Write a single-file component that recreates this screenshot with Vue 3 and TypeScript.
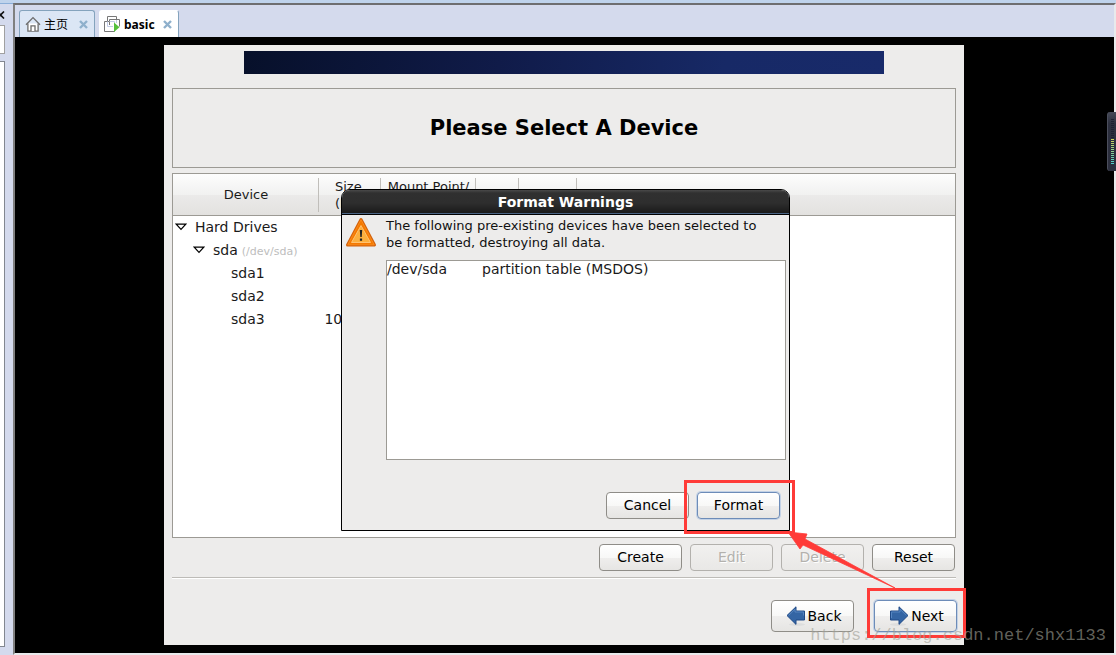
<script setup lang="ts">
interface Row {
  name: string
  level: number
  path?: string
  size?: string
}

const rows: Row[] = [
  { name: 'Hard Drives', level: 0 },
  { name: 'sda', level: 1, path: '(/dev/sda)' },
  { name: 'sda1', level: 2 },
  { name: 'sda2', level: 2 },
  { name: 'sda3', level: 2, size: '10240' },
]

const warnings = [{ device: '/dev/sda', detail: 'partition table (MSDOS)' }]
const meterBars = Array.from({ length: 23 }, (_, i) => i)

function barColor(i: number): string {
  if (i < 10) return '#1d2030'
  const t = (i - 10) / 12
  return `rgb(${Math.round(205 - 125 * t)}, ${Math.round(210 - 5 * t)}, ${Math.round(90 + 110 * t)})`
}
</script>

<template>
  <div class="window">
    <aside class="library">
      <button class="library-close" aria-label="Close library">
        <svg width="5" height="8" viewBox="0 0 5 8"><path d="M-3 0.5 L4 7.5 M4 0.5 L-3 7.5" stroke="#111" stroke-width="1.6" /></svg>
      </button>
      <div class="library-search"></div>
      <div class="library-tree"></div>
    </aside>
    <main class="workspace">
      <nav class="tabs">
        <div class="tab">
          <svg width="16" height="16" viewBox="0 0 16 16" fill="#fff" stroke="#6c6c6c" stroke-width="1.3">
            <path d="M2.9 7.5 V15.2 H13.1 V7.5" />
            <path d="M1 8.8 L8 1.6 L15 8.8" fill="none" />
            <path d="M6 15 V9.8 H10 V15" />
          </svg>
          <a href="#home">主页</a>
          <button class="tab-close" aria-label="Close 主页">
            <svg width="9" height="9" viewBox="0 0 9 9"><path d="M1 1 L8 8 M8 1 L1 8" stroke="#8fb0cc" stroke-width="2.4" /></svg>
          </button>
        </div>
        <div class="tab active">
          <svg width="16" height="16" viewBox="0 0 16 16" fill="none" stroke="#777">
            <path d="M3.5 5.5 V0.5 H12.5 V3.5" />
            <path d="M5.5 9 V3.5 H15.5 V10.5" />
            <path d="M5 5.5 H0.5 V15.5 H10.5 V14" />
            <path d="M3.5 5.5 V10.5 H9 M5.5 5.5 H10.5 V8 M12.5 4 V7" stroke="#c3cde8" />
            <path d="M10 6.5 L15.5 11.3 L10 16 Z" fill="#55c03c" stroke="none" />
          </svg>
          <a href="#basic">basic</a>
          <button class="tab-close" aria-label="Close basic">
            <svg width="9" height="9" viewBox="0 0 9 9"><path d="M1 1 L8 8 M8 1 L1 8" stroke="#8fb0cc" stroke-width="2.4" /></svg>
          </button>
        </div>
      </nav>
      <div class="console">
        <section class="guest">
          <div class="banner"></div>
          <header class="heading"><h1>Please Select A Device</h1></header>
          <div class="devices">
            <table>
              <colgroup>
                <col class="c-device" /><col class="c-size" /><col class="c-mount" /><col class="c-type" /><col class="c-format" /><col />
              </colgroup>
              <thead>
                <tr>
                  <th scope="col">Device</th>
                  <th scope="col" class="size-head">Size<br />(MB)</th>
                  <th scope="col" class="top">Mount Point/</th>
                  <th></th>
                  <th></th>
                  <th class="last"></th>
                </tr>
              </thead>
              <tbody>
                <tr v-for="row in rows" :key="row.name">
                  <td :class="'level' + row.level">
                    <svg v-if="row.level < 2" class="expander" width="12" height="8" viewBox="0 0 12 8">
                      <path d="M1.2 1.2 H10.8 L6 6.4 Z" fill="#fff" stroke="#000" stroke-width="1.2" />
                    </svg>
                    <span>{{ row.name }}</span>
                    <small v-if="row.path">{{ row.path }}</small>
                  </td>
                  <td class="size">{{ row.size }}</td>
                  <td></td>
                  <td></td>
                  <td></td>
                  <td></td>
                </tr>
              </tbody>
            </table>
          </div>
          <div class="actions">
            <button>Create</button>
            <button disabled>Edit</button>
            <button disabled>Delete</button>
            <button>Reset</button>
          </div>
          <footer class="steps">
            <button>
              <svg width="20" height="20" viewBox="0 0 20 20">
                <ellipse cx="11" cy="18.5" rx="8" ry="1.5" fill="#ddd" />
                <path d="M1 9.5 L10 0.8 V5 H18.5 V14 H10 V18.4 Z" fill="#3465a4" stroke="#204a87" />
                <path d="M2.6 9.5 L9 3.2 V6 H17.5 V9.5" fill="none" stroke="#5585c0" />
              </svg>
              <span>Back</span>
            </button>
            <button class="focused">
              <svg width="20" height="20" viewBox="0 0 20 20">
                <ellipse cx="9" cy="18.5" rx="8" ry="1.5" fill="#ddd" />
                <path d="M19 9.5 L10 0.8 V5 H1.5 V14 H10 V18.4 Z" fill="#3465a4" stroke="#204a87" />
                <path d="M2.5 12 V6 H11 V3.2 L17.4 9.5" fill="none" stroke="#5585c0" />
              </svg>
              <span>Next</span>
            </button>
          </footer>

          <div class="dialog" role="dialog" aria-labelledby="dialog-title">
            <h2 id="dialog-title">Format Warnings</h2>
            <div class="dialog-body">
              <svg width="32" height="32" viewBox="0 0 32 32">
                <path d="M16 2.5 L29.5 28 H2.5 Z" fill="#f57900" stroke="#d4630c" stroke-width="3" stroke-linejoin="round" />
                <path d="M16 2.7 L29.2 27.8 H2.8 Z" fill="#f57900" stroke="#fb8b1a" stroke-width="1" stroke-linejoin="round" />
                <path d="M16 8.5 L25.5 25.5 H6.5 Z" fill="#fcaf3e" stroke="#ffc272" stroke-width="1" stroke-linejoin="round" />
                <path d="M14.8 13 H17.2 L16.7 20 H15.3 Z M14.9 21.6 H17.1 V23.8 H14.9 Z" fill="#222" />
              </svg>
              <div class="dialog-content">
                <p>The following pre-existing devices have been selected to be formatted, destroying all data.</p>
                <div class="warning-list">
                  <table>
                    <colgroup><col class="c-path" /><col /></colgroup>
                    <tbody>
                      <tr v-for="w in warnings" :key="w.device">
                        <td>{{ w.device }}</td>
                        <td>{{ w.detail }}</td>
                      </tr>
                    </tbody>
                  </table>
                </div>
              </div>
            </div>
            <div class="dialog-actions">
              <button>Cancel</button>
              <button class="focused">Format</button>
            </div>
          </div>

          <svg class="marks" width="810" height="600" viewBox="0 0 810 600" aria-hidden="true">
            <rect x="521.5" y="436.5" width="108" height="51" fill="none" stroke="#ff3b38" stroke-width="3" />
            <rect x="704.5" y="544.5" width="96" height="47" fill="none" stroke="#ff3b38" stroke-width="3" />
            <path d="M624 487 L643 489 L641 494 L731 543 L639 500 L636 504 Z" fill="#ff3b38" stroke="#ff3b38" stroke-width="0.8" />
          </svg>
        </section>
        <div class="watermark">https://blog.csdn.net/shx1133</div>
        <div class="meter">
          <i v-for="i in meterBars" :key="i" :style="{ background: barColor(i) }"></i>
        </div>
      </div>
    </main>
  </div>
</template>

<style>
body {
  margin: 0;
}
</style>

<style scoped>
* {
  box-sizing: border-box;
}
.window {
  min-height: 100vh;
  display: flex;
  background: #d4daed;
  border-top: 3px solid #bfd3ec;
  font-family: "DejaVu Sans", sans-serif;
  font-size: 14px;
  line-height: 17px;
  color: #1a1a1a;
}
button {
  font: inherit;
}
.library {
  width: 13px;
  flex: none;
  display: flex;
  flex-direction: column;
  padding: 7px 8px 8px 0;
  border-top: 1px solid #8aaed8;
}
.library-close {
  width: 5px;
  height: 8px;
  padding: 0;
  border: 0;
  background: none;
}
.library-close svg {
  display: block;
}
.library-search {
  height: 29px;
  margin: 6px 0 7px;
  background: #fff;
  border: 1px solid #a0a0a0;
  border-left: 0;
}
.library-tree {
  flex: 1;
  background: #fff;
  border: 1px solid #828790;
  border-left: 0;
}
.workspace {
  flex: 1;
  min-width: 0;
  display: flex;
  flex-direction: column;
  border-left: 2px solid #808080;
  border-top: 2px solid #6e6e70;
  border-right: 2px solid #e8eaec;
  border-bottom: 2px solid #e8eaec;
}
.tabs {
  display: flex;
  gap: 4px;
  height: 32px;
  padding: 5px 4px 0;
  font-family: "Noto Sans", "Noto Sans CJK SC", sans-serif;
  font-size: 12px;
}
.tab {
  display: flex;
  align-items: center;
  gap: 3px;
  padding: 0 6px 0 5px;
  background: #dbe6f5;
  border: 1px solid #84a3bd;
  border-bottom: 0;
  border-radius: 3px 3px 0 0;
}
.tab.active {
  padding-left: 4px;
  gap: 4px;
  background: #fff;
  border-color: #fff #84a3bd #fff #fff;
  font-weight: bold;
}
.tab a {
  color: #000;
  text-decoration: none;
}
.tab-close {
  display: flex;
  margin-left: 8px;
  padding: 0;
  border: 0;
  background: none;
}
.tab.active .tab-close {
  margin-left: 4px;
}
.console {
  flex: 1;
  position: relative;
  padding: 8px 1px 8px 0;
  background: #000;
}
.guest {
  position: relative;
  width: 100%;
  max-width: 800px;
  min-height: 600px;
  margin: 0 auto;
  padding: 6px 8px 13px;
  display: flex;
  flex-direction: column;
  background: #edeceb;
}
.banner {
  width: 640px;
  max-width: 100%;
  height: 23px;
  align-self: center;
  background: linear-gradient(100deg, #07102a 0%, #101b49 40%, #172966 75%, #182a6a 100%);
}
.heading {
  height: 80px;
  margin-top: 14px;
  display: flex;
  align-items: center;
  justify-content: center;
  border: 1px solid #9c9a94;
}
h1 {
  margin: 0;
  font-size: 21px;
  line-height: 26px;
  color: #000;
}
.devices {
  flex: 1;
  margin-top: 5px;
  background: #fff;
  border: 1px solid #9c9a94;
}
table {
  width: 100%;
  table-layout: fixed;
  border-spacing: 0;
}
.c-device { width: 146px; }
.c-size { width: 62px; }
.c-mount { width: 95px; }
.c-type { width: 43px; }
.c-format { width: 58px; }
.c-path { width: 95px; }
thead {
  background: linear-gradient(#fdfdfd, #f1f1f0 50%, #ebeae9 51%, #e2e1df);
}
th {
  height: 42px;
  padding: 0;
  font-size: 13px;
  font-weight: normal;
  border-bottom: 1px solid #9c9a94;
  background: linear-gradient(#c0beba, #c0beba) right center / 1px 34px no-repeat;
}
th.last {
  background: none;
}
th.top {
  padding-top: 4px;
  vertical-align: top;
}
th.size-head {
  padding-left: 16px;
  text-align: left;
}
td {
  height: 23px;
  padding: 0;
  white-space: nowrap;
}
.level0 { padding-left: 2px; }
.level1 { padding-left: 20px; }
.level2 { padding-left: 58px; }
.expander {
  margin-right: 8px;
  vertical-align: 1px;
}
small {
  margin-left: 4px;
  font-size: 11px;
  color: #bdbdbd;
}
.size {
  padding-right: 12px;
  text-align: right;
}
.guest button {
  width: 83px;
  height: 27px;
  padding: 0;
  color: #000;
  background: linear-gradient(#fff, #f8f8f7 50%, #efeeed 51%, #e6e5e3);
  border: 1px solid #8f8d88;
  border-radius: 4px;
}
.guest button:disabled {
  color: #b3b1ad;
  text-shadow: 1px 1px #fff;
  background: linear-gradient(#f1f0ef, #e9e8e6);
  border-color: #b3b1ad;
}
.guest button.focused {
  border-color: #6d8cb8;
  box-shadow: 0 0 0 1px #c3d2e6;
}
.actions {
  display: flex;
  justify-content: flex-end;
  gap: 8px;
  padding: 6px 1px 6px 0;
  border-bottom: 1px solid #bdbbb7;
  box-shadow: 0 1px #fff;
}
.steps {
  display: flex;
  justify-content: flex-end;
  gap: 20px;
  margin-right: -1px;
  padding-top: 22px;
}
.guest .steps button {
  height: 32px;
  display: flex;
  align-items: center;
  justify-content: center;
  gap: 2px;
  padding-left: 2px;
}
.dialog {
  position: absolute;
  left: 177px;
  top: 144px;
  width: 449px;
  background: #edeceb;
  border: 1px solid #000;
  border-radius: 9px 9px 0 0;
}
h2 {
  height: 25px;
  margin: 0;
  font-size: 14px;
  line-height: 25px;
  text-align: center;
  color: #fff;
  background: linear-gradient(#4a4a4a, #303030 3px, #2e2e2e 13px, #181818);
  border-bottom: 1px solid #000;
  box-shadow: inset 0 -1px #4a6484;
  border-radius: 8px 8px 0 0;
}
.dialog-body {
  display: flex;
  gap: 9px;
  padding: 2px 3px 0;
}
.dialog-content {
  flex: 1;
  min-width: 0;
}
.dialog p {
  margin: 0 0 9px;
  padding-right: 20px;
  font-size: 13px;
  color: #111;
}
.warning-list {
  height: 200px;
  background: #fff;
  border: 1px solid #9c9a94;
}
.warning-list td {
  height: 17px;
}
.dialog-actions {
  display: flex;
  justify-content: flex-end;
  gap: 8px;
  padding: 32px 9px 11px;
}
.marks {
  position: absolute;
  left: 0;
  top: 0;
  pointer-events: none;
}
.watermark {
  position: absolute;
  right: 8px;
  bottom: 7px;
  font-family: "Liberation Mono", monospace;
  font-size: 17px;
  line-height: 20px;
  color: rgba(160, 160, 150, 0.62);
}
.meter {
  position: absolute;
  right: -2px;
  top: 75px;
  width: 9px;
  height: 59px;
  padding: 7px 2px 0 3px;
  display: grid;
  grid-auto-rows: 1px;
  row-gap: 1px;
  background: linear-gradient(#464a58, #2b2e3d 20%, #2b2e3d);
  border-left: 1px solid #4b4e5c;
  border-radius: 3px 0 0 3px;
}
</style>
